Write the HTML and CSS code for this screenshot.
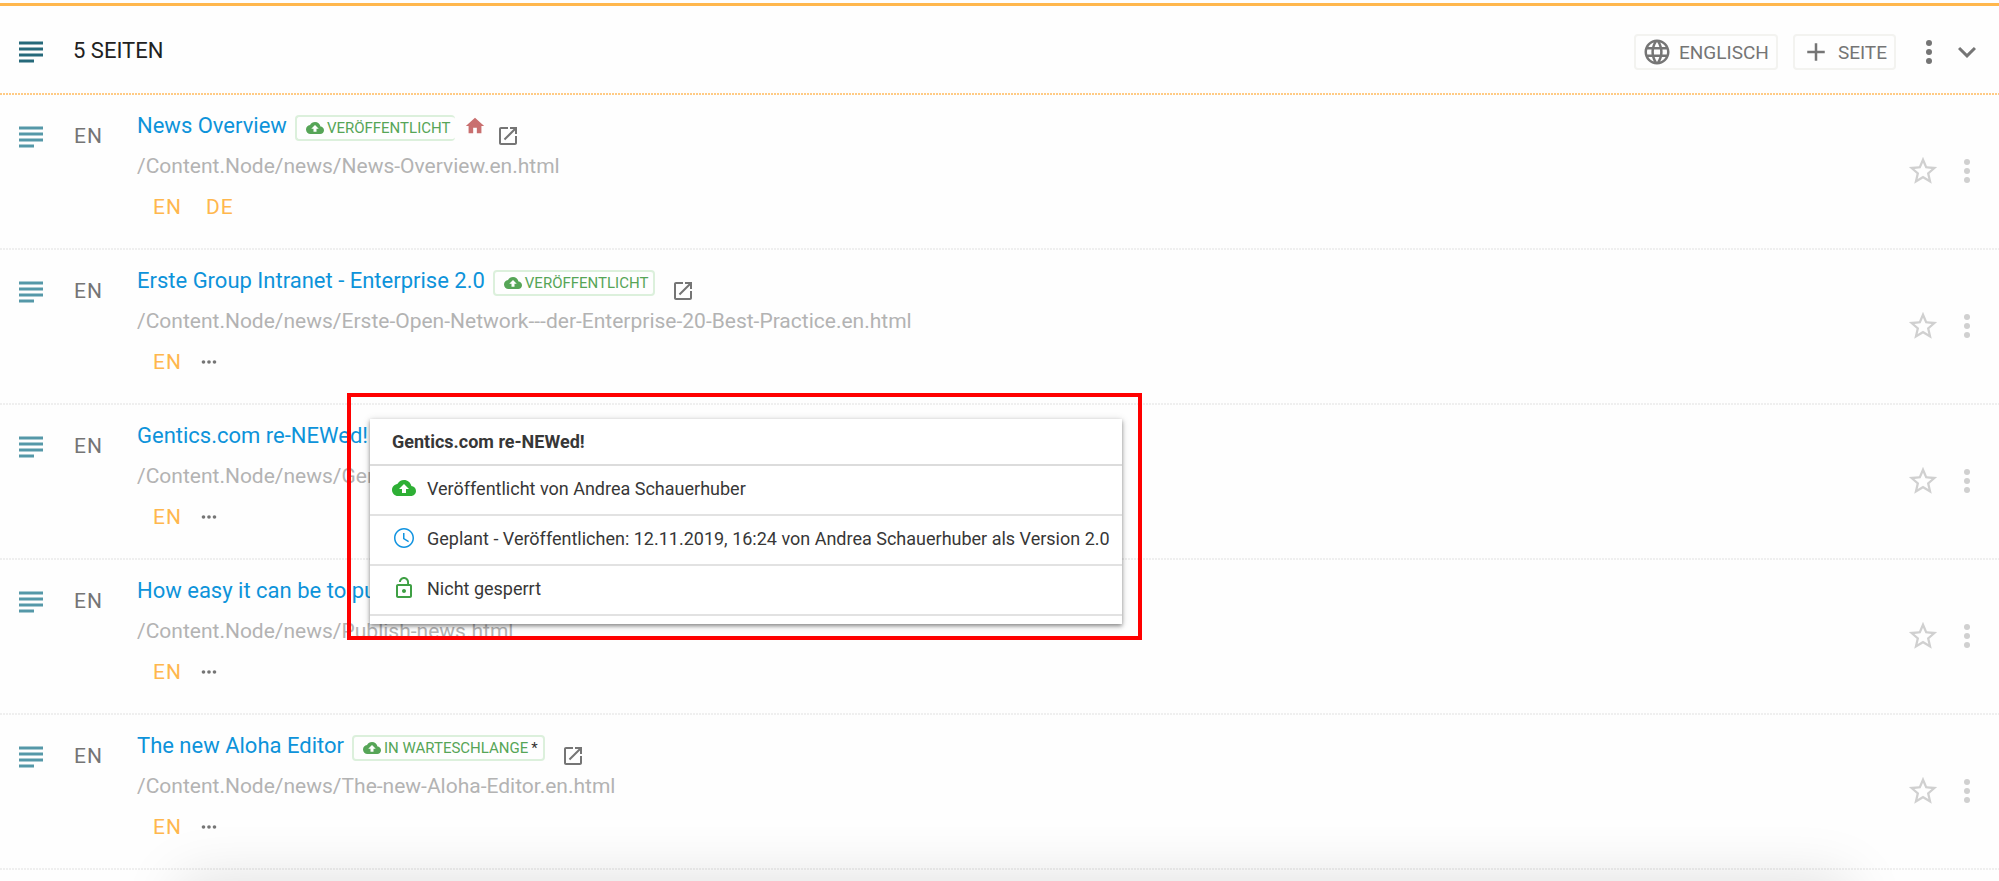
FILE: index.html
```html
<!DOCTYPE html>
<html lang="de">
<head>
<meta charset="utf-8">
<title>5 Seiten</title>
<link rel="stylesheet" href="styles.css">
</head>
<body>
<svg class="sprite" aria-hidden="true">
  <symbol id="subject" viewBox="0 0 24 24"><path d="M14 17H4v2h10v-2zm6-8H4v2h16V9zM4 15h16v-2H4v2zM4 5v2h16V5H4z"/></symbol>
  <symbol id="cloud" viewBox="0 0 24 24"><path d="M19.35 10.04C18.67 6.59 15.64 4 12 4 9.11 4 6.6 5.64 5.35 8.04 2.34 8.36 0 10.91 0 14c0 3.31 2.69 6 6 6h13c2.76 0 5-2.24 5-5 0-2.64-2.05-4.78-4.65-4.96zM14 13v4h-4v-4H7l5-5 5 5h-3z"/></symbol>
  <symbol id="home" viewBox="0 0 24 24"><path d="M10 20v-6h4v6h5v-8h3L12 3 2 12h3v8z"/></symbol>
  <symbol id="open" viewBox="0 0 24 24"><path d="M19 19H5V5h7V3H5c-1.11 0-2 .9-2 2v14c0 1.1.89 2 2 2h14c1.1 0 2-.9 2-2v-7h-2v7zM14 3v2h3.59l-9.83 9.83 1.41 1.41L19 6.41V10h2V3h-7z"/></symbol>
  <symbol id="star" viewBox="0 0 24 24"><path d="M22 9.24l-7.19-.62L12 2 9.19 8.63 2 9.24l5.46 4.73L5.82 21 12 17.27 18.18 21l-1.63-7.03L22 9.24zM12 15.4l-3.76 2.27 1-4.28-3.32-2.88 4.38-.38L12 6.1l1.71 4.04 4.38.38-3.32 2.88 1 4.28L12 15.4z"/></symbol>
  <symbol id="more" viewBox="0 0 24 24"><circle cx="12" cy="6" r="2"/><circle cx="12" cy="12" r="2"/><circle cx="12" cy="18" r="2"/></symbol>
  <symbol id="dots" viewBox="0 0 24 24"><circle cx="6" cy="12" r="2"/><circle cx="12" cy="12" r="2"/><circle cx="18" cy="12" r="2"/></symbol>
  <symbol id="expand" viewBox="0 0 24 24"><path d="M16.59 8.59L12 13.17 7.41 8.59 6 10l6 6 6-6z"/></symbol>
  <symbol id="plus" viewBox="0 0 24 24"><path d="M19 13h-6v6h-2v-6H5v-2h6V5h2v6h6v2z"/></symbol>
  <symbol id="globe" viewBox="0 0 24 24"><path d="M11.99 2C6.47 2 2 6.48 2 12s4.47 10 9.99 10C17.52 22 22 17.52 22 12S17.52 2 11.99 2zm6.93 6h-2.95c-.32-1.25-.78-2.45-1.38-3.56 1.84.63 3.37 1.91 4.33 3.56zM12 4.04c.83 1.2 1.48 2.53 1.91 3.96h-3.82c.43-1.43 1.08-2.76 1.91-3.96zM4.26 14C4.1 13.36 4 12.69 4 12s.1-1.36.26-2h3.38c-.08.66-.14 1.32-.14 2 0 .68.06 1.34.14 2H4.26zm.82 2h2.95c.32 1.25.78 2.45 1.38 3.56-1.84-.63-3.37-1.9-4.33-3.56zm2.95-8H5.08c.96-1.66 2.49-2.93 4.33-3.56C8.81 5.55 8.35 6.75 8.03 8zM12 19.96c-.83-1.2-1.48-2.53-1.91-3.96h3.82c-.43 1.43-1.08 2.76-1.91 3.96zM14.34 14H9.66c-.09-.66-.16-1.32-.16-2 0-.68.07-1.35.16-2h4.68c.09.65.16 1.32.16 2 0 .68-.07 1.34-.16 2zm.25 5.56c.6-1.11 1.06-2.31 1.38-3.56h2.95c-.96 1.65-2.49 2.93-4.33 3.56zM16.36 14c.08-.66.14-1.32.14-2 0-.68-.06-1.34-.14-2h3.38c.16.64.26 1.31.26 2s-.1 1.36-.26 2h-3.38z"/></symbol>
  <symbol id="clock" viewBox="0 0 24 24"><path d="M11.99 2C6.47 2 2 6.48 2 12s4.47 10 9.99 10C17.52 22 22 17.52 22 12S17.52 2 11.99 2zM12 20.5c-4.7 0-8.5-3.8-8.5-8.5s3.8-8.5 8.5-8.5 8.5 3.8 8.5 8.5-3.8 8.5-8.5 8.5zM12.5 7H11v6l5.25 3.15.75-1.23-4.5-2.67z"/></symbol>
  <symbol id="unlock" viewBox="0 0 24 24"><path d="M12 17c1.1 0 2-.9 2-2s-.9-2-2-2-2 .9-2 2 .9 2 2 2zm6-9h-1V6c0-2.76-2.24-5-5-5S7 3.24 7 6h1.9c0-1.71 1.39-3.1 3.1-3.1 1.71 0 3.1 1.39 3.1 3.1v2H6c-1.1 0-2 .9-2 2v10c0 1.1.9 2 2 2h12c1.1 0 2-.9 2-2V10c0-1.1-.9-2-2-2zm0 12H6V10h12v10z"/></symbol>
</svg>
<div class="page">
  <header class="toolbar">
    <svg class="icon icon-lg type-icon type-icon-dark"><use href="#subject"/></svg>
    <h1 class="heading">5 SEITEN</h1>
    <div class="tools">
      <button class="btn" type="button"><svg class="icon icon-md"><use href="#globe"/></svg>ENGLISCH</button>
      <button class="btn" type="button"><svg class="icon icon-md"><use href="#plus"/></svg>SEITE</button>
      <button class="icon-btn menu-btn" type="button" aria-label="Menü"><svg class="icon icon-lg"><use href="#more"/></svg></button>
      <button class="icon-btn" type="button" aria-label="Einklappen"><svg class="icon icon-lg"><use href="#expand"/></svg></button>
    </div>
  </header>
  <main class="list">
    <article class="row">
      <svg class="icon icon-lg type-icon"><use href="#subject"/></svg>
      <span class="lang">EN</span>
      <div class="content">
        <div class="title-line"><a class="title" href="#">News Overview</a><span class="badge badge-open"><svg class="icon badge-icon"><use href="#cloud"/></svg>VERÖFFENTLICHT</span><svg class="icon home"><use href="#home"/></svg><a class="open" href="#" aria-label="Öffnen"><svg class="icon icon-sm"><use href="#open"/></svg></a></div>
        <div class="path">/Content.Node/news/News-Overview.en.html</div>
        <div class="langs"><a class="code" href="#">EN</a><a class="code" href="#">DE</a></div>
      </div>
      <div class="actions"><button class="icon-btn" type="button" aria-label="Favorit"><svg class="icon icon-star"><use href="#star"/></svg></button><button class="icon-btn" type="button" aria-label="Menü"><svg class="icon icon-lg"><use href="#more"/></svg></button></div>
    </article>
    <article class="row">
      <svg class="icon icon-lg type-icon"><use href="#subject"/></svg>
      <span class="lang">EN</span>
      <div class="content">
        <div class="title-line"><a class="title" href="#">Erste Group Intranet - Enterprise 2.0</a><span class="badge"><svg class="icon badge-icon"><use href="#cloud"/></svg>VERÖFFENTLICHT</span><a class="open" href="#" aria-label="Öffnen"><svg class="icon icon-sm"><use href="#open"/></svg></a></div>
        <div class="path">/Content.Node/news/Erste-Open-Network---der-Enterprise-20-Best-Practice.en.html</div>
        <div class="langs"><a class="code" href="#">EN</a><button class="icon-btn more-langs" type="button" aria-label="Weitere Sprachen"><svg class="icon icon-dots"><use href="#dots"/></svg></button></div>
      </div>
      <div class="actions"><button class="icon-btn" type="button" aria-label="Favorit"><svg class="icon icon-star"><use href="#star"/></svg></button><button class="icon-btn" type="button" aria-label="Menü"><svg class="icon icon-lg"><use href="#more"/></svg></button></div>
    </article>
    <article class="row">
      <svg class="icon icon-lg type-icon"><use href="#subject"/></svg>
      <span class="lang">EN</span>
      <div class="content">
        <div class="title-line"><a class="title" href="#">Gentics.com re-NEWed!</a></div>
        <div class="path">/Content.Node/news/Gentics.en.html</div>
        <div class="langs"><a class="code" href="#">EN</a><button class="icon-btn more-langs" type="button" aria-label="Weitere Sprachen"><svg class="icon icon-dots"><use href="#dots"/></svg></button></div>
        <aside class="callout">
          <div class="popup">
            <h2 class="popup-title">Gentics.com re-NEWed!</h2>
            <div class="popup-row"><svg class="icon icon-sm green"><use href="#cloud"/></svg>Veröffentlicht von Andrea Schauerhuber</div>
            <div class="popup-row"><svg class="icon icon-sm blue"><use href="#clock"/></svg>Geplant - Veröffentlichen: 12.11.2019, 16:24 von Andrea Schauerhuber als Version 2.0</div>
            <div class="popup-row"><svg class="icon icon-sm leaf"><use href="#unlock"/></svg>Nicht gesperrt</div>
          </div>
        </aside>
      </div>
      <div class="actions"><button class="icon-btn" type="button" aria-label="Favorit"><svg class="icon icon-star"><use href="#star"/></svg></button><button class="icon-btn" type="button" aria-label="Menü"><svg class="icon icon-lg"><use href="#more"/></svg></button></div>
    </article>
    <article class="row">
      <svg class="icon icon-lg type-icon"><use href="#subject"/></svg>
      <span class="lang">EN</span>
      <div class="content">
        <div class="title-line"><a class="title" href="#">How easy it can be to publish</a></div>
        <div class="path">/Content.Node/news/Publish-news.html</div>
        <div class="langs"><a class="code" href="#">EN</a><button class="icon-btn more-langs" type="button" aria-label="Weitere Sprachen"><svg class="icon icon-dots"><use href="#dots"/></svg></button></div>
      </div>
      <div class="actions"><button class="icon-btn" type="button" aria-label="Favorit"><svg class="icon icon-star"><use href="#star"/></svg></button><button class="icon-btn" type="button" aria-label="Menü"><svg class="icon icon-lg"><use href="#more"/></svg></button></div>
    </article>
    <article class="row">
      <svg class="icon icon-lg type-icon"><use href="#subject"/></svg>
      <span class="lang">EN</span>
      <div class="content">
        <div class="title-line"><a class="title" href="#">The new Aloha Editor</a><span class="badge"><svg class="icon badge-icon"><use href="#cloud"/></svg>IN WARTESCHLANGE <span class="mark">*</span></span><a class="open" href="#" aria-label="Öffnen"><svg class="icon icon-sm"><use href="#open"/></svg></a></div>
        <div class="path">/Content.Node/news/The-new-Aloha-Editor.en.html</div>
        <div class="langs"><a class="code" href="#">EN</a><button class="icon-btn more-langs" type="button" aria-label="Weitere Sprachen"><svg class="icon icon-dots"><use href="#dots"/></svg></button></div>
      </div>
      <div class="actions"><button class="icon-btn" type="button" aria-label="Favorit"><svg class="icon icon-star"><use href="#star"/></svg></button><button class="icon-btn" type="button" aria-label="Menü"><svg class="icon icon-lg"><use href="#more"/></svg></button></div>
    </article>
  </main>
  <div class="bottom-shade"></div>
</div>
</body>
</html>
```

FILE: styles.css
```css
* { box-sizing: border-box; }

body {
  margin: 0;
  background: #fefefe;
  color: #212121;
  font-family: Roboto, "Liberation Sans", sans-serif;
  font-size: 21px;
}

a { color: inherit; text-decoration: none; }

button {
  border: 0;
  background: none;
  color: inherit;
  font: inherit;
  padding: 0;
}

.sprite { display: none; }

.page {
  position: relative;
  min-height: 100vh;
  padding-top: 3px;
  overflow: hidden;
}

.icon { display: block; flex: none; fill: currentColor; width: 24px; height: 24px; }
.icon-lg { width: 36px; height: 36px; }
.icon-md { width: 30px; height: 30px; }
.icon-star { width: 34px; height: 34px; }
.icon-dots { width: 22px; height: 22px; }
.icon-btn { display: flex; align-items: center; }

.type-icon { color: #5598a8; }
.type-icon-dark { color: #26697a; }

.toolbar,
.row {
  display: grid;
  grid-template-columns: 60px 64px 1fr auto;
  padding: 0 14px 0 13px;
  background: repeating-linear-gradient(90deg, var(--line) 0 2px, transparent 2px 3px) left bottom / 100% 2px no-repeat;
}

.toolbar {
  --line: #ffcb85;
  grid-template-columns: 60px 1fr auto;
  height: 92px;
  border-top: 3px solid #ffb74d;
}

.toolbar .type-icon { margin-top: 28px; }

.heading {
  margin: 31px 0 0;
  font-size: 22px;
  font-weight: 400;
  line-height: 28px;
}

.tools {
  display: flex;
  align-items: center;
  height: 92px;
  color: #757575;
}

.btn {
  display: flex;
  align-items: center;
  gap: 7px;
  height: 36px;
  margin-right: 15px;
  padding: 0 7px 0 6px;
  border: 2px solid #f3f3f0;
  border-radius: 4px;
  font-size: 19px;
}

.menu-btn { margin-right: 2px; }

.row { --line: #efefef; min-height: 155px; }
.row .type-icon { margin-top: 24px; }

.lang {
  margin: 28px 0 0 1px;
  color: #757575;
  font-size: 21px;
  letter-spacing: 1px;
  line-height: 26px;
}

.content {
  position: relative;
  min-width: 0;
  padding-top: 17px;
  white-space: nowrap;
}

.title-line { display: flex; height: 28px; align-items: center; }
.title { color: #0d93da; font-size: 22px; line-height: 28px; }

.badge {
  display: flex;
  align-items: center;
  gap: 3px;
  height: 26px;
  margin: 4px 0 0 8px;
  padding: 0 5px 0 9px;
  border: 2px solid #dcf0dc;
  border-radius: 4px;
  color: #56a557;
  font-size: 15px;
}

.badge-open { border-right: 0; }
.badge-icon { width: 18px; height: 18px; }
.mark { color: #333; }

.home { width: 22px; height: 22px; margin-left: 9px; color: #c96f6f; }
.open { margin: 20px 0 0 16px; color: #757575; }
.home + .open { margin-left: 10px; }

.path {
  padding-top: 12px;
  color: #b3b3b3;
  line-height: 28px;
}

.langs {
  display: flex;
  align-items: center;
  gap: 24px;
  padding: 13px 0 0 16px;
  color: #ffb74d;
  font-size: 21px;
  letter-spacing: 1px;
  line-height: 28px;
}

.more-langs { margin-left: -8px; color: #757575; }

.actions {
  display: flex;
  align-items: center;
  gap: 9px;
  padding-bottom: 3px;
  color: #d0d0d0;
}

.callout {
  position: absolute;
  z-index: 2;
  top: -12px;
  left: 210px;
  padding: 22px 16px 12px 19px;
  border: 4px solid #f00;
}

.popup {
  padding-bottom: 8px;
  background: #fff;
  box-shadow: 0 2px 4px rgba(0, 0, 0, .4), 0 1px 8px rgba(0, 0, 0, .15);
  color: #373737;
  font-size: 18px;
}

.popup-title {
  margin: 0;
  padding: 0 22px;
  border-bottom: 2px solid #dcdcdc;
  font-size: 18px;
  line-height: 45px;
}

.popup-row {
  display: flex;
  align-items: center;
  gap: 11px;
  height: 50px;
  padding: 0 12px 4px 22px;
  border-bottom: 2px solid #e2e2e2;
}

.green { color: #2eaf35; }
.blue { color: #1093e0; }
.leaf { color: #3fa045; }

.bottom-shade {
  position: absolute;
  top: 100%;
  left: 180px;
  right: 150px;
  height: 80px;
  box-shadow: 0 0 60px rgba(0, 0, 0, .13);
}
```
